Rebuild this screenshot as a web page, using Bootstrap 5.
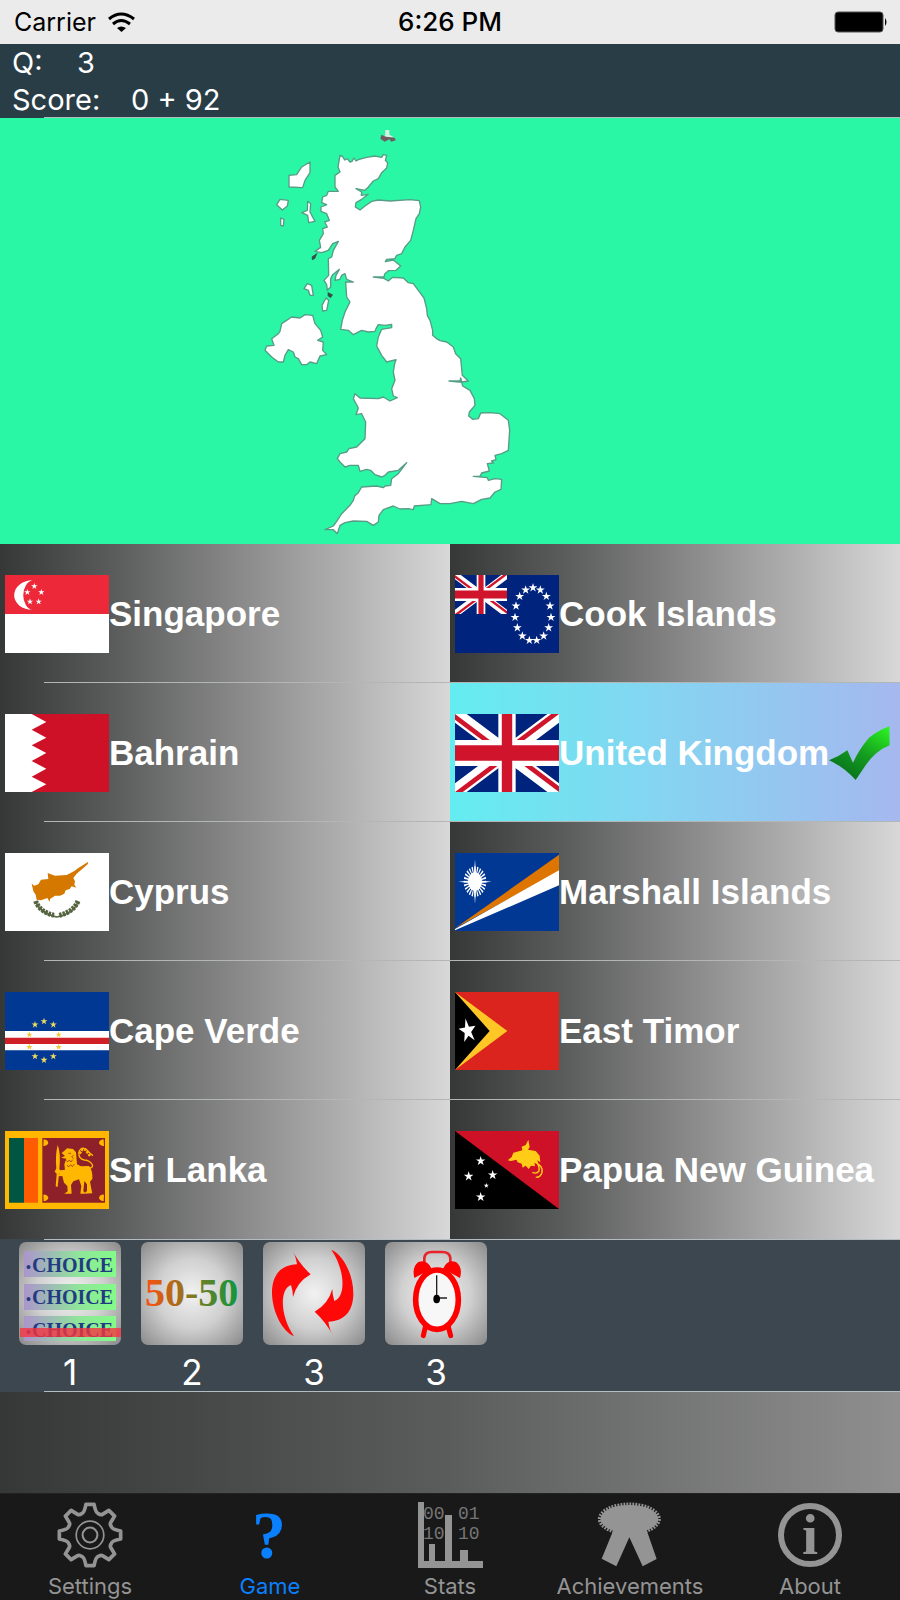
<!DOCTYPE html>
<html lang="en">
<head>
<meta charset="utf-8">
<meta name="viewport" content="width=device-width, initial-scale=1">
<title>Country Quiz</title>
<link href="https://cdn.jsdelivr.net/npm/bootstrap@5.3.0/dist/css/bootstrap.min.css" rel="stylesheet">
<style>
  body { font-family: Inter, Roboto, sans-serif; background: #191919; }
  .statusbar { background: #ebebeb; color: #000; height: 44px; font-size: 25px; line-height: 46px; }
  .carrier { padding-left: 14px; }
  .clock { font-weight: 500; font-size: 26px; }
  .scorebar { background: #293d47; color: #fff; font-size: 29px; line-height: 37px; }
  .score-row { height: 37px; padding-left: 12px; }
  .score-row + .score-row { height: 36px; }
  .label-q { width: 65px; }
  .label-score { width: 119px; }
  .inset-line { height: 1px; margin-left: 44px; background: #b4bcc0; }
  .map-panel { background: #29f7a5; }
  .map-panel svg { display: block; width: 100%; height: 426px; }
  .answer {
    height: 139px; padding: 0 0 0 5px; border: 0; text-align: left; color: #fff;
    font: bold 35px/40px "Liberation Sans", Arial, sans-serif; white-space: nowrap;
    background: linear-gradient(90deg, #353837 0%, #5a5c5b 25%, #848484 50%, #adadad 75%, #d8d8d8 100%);
  }
  .answer.correct { background: linear-gradient(90deg, #63edf0 0%, #84d5f1 45%, #a5b8ef 100%); }
  .answer-line { height: 1px; background: #b3b6b6; margin-top: -1px; position: relative; }
  .left-line { margin-left: 44px; }
  .flag { width: 104px; height: 78px; flex: none; }
  .powers-wrap { background: #3d474f; }
  .powers { padding: 2px 19px 0; gap: 20px; height: 151px; }
  .power { background: none; border: 0; padding: 0; width: 102px; color: #fff; font-size: 35px; line-height: 54px; }
  .power svg { display: block; width: 102px; height: 103px; }
  .power-base { fill: url(#silver); }
  .ad-space { height: 101px; background: linear-gradient(90deg, #353837 0%, #5b5d5c 50%, #8f8f8f 100%); }
  .tabs { background: #191919; border-top: 1px solid #222; height: 106px; padding-top: 8px; }
  .tab-item { color: #949494; font-size: 22px; line-height: 36px; text-decoration: none; text-align: center; }
  .tab-item svg { display: block; margin: 0 auto; width: 66px; height: 66px; overflow: visible; }
  .tab-item.current { color: #0a80ff; }
  .serif-mark { font-family: "Liberation Serif", serif; font-weight: bold; }
  .mono-mark { font-family: "Liberation Mono", monospace; }
</style>
</head>
<body>

<svg width="0" height="0" class="position-absolute" aria-hidden="true">
  <defs>
    <radialGradient id="silver" cx=".5" cy=".5" r=".68">
      <stop offset="0" stop-color="#f2f2f2"/><stop offset=".5" stop-color="#d0d0d0"/><stop offset="1" stop-color="#8e8e8e"/>
    </radialGradient>
    <linearGradient id="choice"><stop offset="0" stop-color="#ab95cc"/><stop offset=".6" stop-color="#8fe69a"/><stop offset="1" stop-color="#84fa88"/></linearGradient>
    <linearGradient id="fifty"><stop offset="0" stop-color="#ff5010"/><stop offset=".5" stop-color="#847820"/><stop offset="1" stop-color="#0c983e"/></linearGradient>
    <linearGradient id="tick" x1=".2" y1="1" x2=".9" y2="0"><stop offset="0" stop-color="#066c1c"/><stop offset=".5" stop-color="#149c20"/><stop offset="1" stop-color="#2cf020"/></linearGradient>
    <polygon id="star" points="0,-1 .225,-.309 .951,-.309 .363,.118 .588,.809 0,.382 -.588,.809 -.363,.118 -.951,-.309 -.225,-.309"/>
    <clipPath id="saltire"><path d="M30 15h30v15zv15h-30zh-30v-15zv-15h30z"/></clipPath>
    <symbol id="union" viewBox="0 0 60 30" preserveAspectRatio="none">
      <path fill="#00247d" d="M0 0h60v30H0z"/>
      <path d="M0 0 60 30M60 0 0 30" stroke="#fff" stroke-width="6"/>
      <path d="M0 0 60 30M60 0 0 30" stroke="#cf142b" stroke-width="4" clip-path="url(#saltire)"/>
      <path d="M30 0v30M0 15h60" stroke="#fff" stroke-width="10"/>
      <path d="M30 0v30M0 15h60" stroke="#cf142b" stroke-width="6"/>
    </symbol>
  </defs>
</svg>

<div class="statusbar d-flex align-items-center position-relative">
  <span class="carrier">Carrier</span>
  <svg class="ms-2 me-auto" width="34" height="22" viewBox="0 0 34 22" aria-hidden="true">
    <g fill="none" stroke="#000" stroke-width="3"><path d="M5 8q12-10 25 0"/><path d="M9 13q8-7 17 0"/></g>
    <path d="M13 17q4-3 9 0l-4.500 4z"/>
  </svg>
  <span class="clock position-absolute start-50 translate-middle-x">6:26 PM</span>
  <svg width="66" height="22" viewBox="0 0 66 22" role="img" aria-label="Battery full">
    <rect x="1" y="1" width="48" height="20" rx="3" stroke="#555"/><path d="M51 7q3 4 0 8z"/>
  </svg>
</div>

<header class="scorebar">
  <div class="score-row d-flex"><span class="label-q">Q:</span><span>3</span></div>
  <div class="score-row d-flex"><span class="label-score">Score:</span><span>0 + 92</span></div>
  <div class="inset-line"></div>
</header>

<main>
  <div class="map-panel">
    <svg viewBox="-750 8 2700 1278" preserveAspectRatio="xMinYMid meet" role="img" aria-label="Country outline">
      <g fill="#fff" stroke="#579c86" stroke-width="4" stroke-linejoin="round">
        <path d="M270 120 278 124 284 134 292 130 300 140 306 138 312 128 318 137 325 133 350 126 375 122 395 126 400 118 410 120 406 135 413 142 410 158 395 172 385 190 370 197 355 215 345 225 318 220 335 230 334 240 355 237 335 252 318 262 316 275 330 284 345 272 365 258 385 254 420 257 480 253 508 256 512 275 508 295 498 310 490 345 482 375 465 395 455 415 440 420 435 430 410 432 406 439 430 434 452 452 438 465 415 466 404 476 402 485 370 485 402 489 415 497 428 486 460 488 475 502 490 505 505 525 522 548 530 580 532 600 540 615 548 645 548 660 560 670 570 676 590 680 610 695 617 715 632 730 637 780 655 797 635 800 632 788 630 797 597 797 635 801 638 812 660 825 673 850 675 870 658 890 656 902 668 912 685 910 692 893 720 892 750 895 775 915 779 945 775 1005 755 1015 735 1020 738 1033 725 1037 730 1043 712 1045 718 1067 695 1073 690 1083 670 1083 712 1087 715 1095 735 1090 755 1092 753 1122 735 1130 720 1148 695 1152 670 1165 635 1158 600 1165 570 1165 545 1150 543 1168 493 1172 490 1183 475 1180 450 1181 430 1172 400 1183 387 1200 385 1220 370 1230 350 1218 310 1217 285 1222 270 1230 262 1255 250 1243 225 1243 250 1232 262 1215 275 1195 300 1170 310 1155 314 1142 325 1132 335 1115 380 1112 400 1117 405 1112 422 1110 425 1090 445 1075 470 1042 445 1065 415 1070 405 1080 395 1085 375 1078 362 1065 350 1062 330 1068 325 1050 300 1050 285 1055 270 1040 262 1030 270 1015 290 1010 297 1000 320 995 345 970 347 920 335 895 318 898 325 878 310 850 315 835 330 848 385 850 400 845 420 857 442 847 430 842 425 820 435 795 430 770 434 745 438 733 410 740 395 720 380 692 385 665 395 642 425 637 425 627 405 630 385 628 378 640 375 648 355 650 335 645 310 658 295 645 272 642 277 615 285 590 300 560 290 545 287 500 310 500 290 492 285 475 275 480 270 492 255 495 258 480 268 462 248 478 242 490 242 515 232 525 230 508 222 495 236 480 235 430 245 425 250 405 265 378 248 385 235 405 215 412 195 408 212 396 208 375 220 355 218 340 232 335 224 320 238 315 230 295 213 288 213 275 230 268 215 262 218 245 230 240 235 228 265 228 255 215 255 180 270 170 264 155Z"/>
        <path d="M90 648 95 625 125 605 150 608 165 598 188 600 195 625 212 645 218 665 203 675 220 680 218 705 230 718 210 722 200 745 180 740 170 748 155 748 145 730 135 725 130 710 115 703 105 720 100 740 85 740 65 725 45 705 50 692 72 690 65 670 85 655Z"/>
        <path d="M180 140 180 172 165 195 158 217 117 215 117 180 140 178 155 155ZM80 268 90 252 115 255 112 272 97 284ZM173 258 182 265 180 290 195 318 176 322 173 300 155 292 172 285ZM92 308 102 312 100 332 92 330ZM162 520 172 505 185 510 190 540 180 540 175 525ZM228 548 236 555 230 585 218 587 216 570Z"/>
      </g>
      <path d="M400 68 406 58V44H418V58L432 66Z" fill="#dcefe6"/>
      <path d="M394 58 408 64 434 67 437 75 424 79 418 72 404 79 391 70Z" fill="#705c60"/>
      <path d="M185 424 203 412 195 430 186 435ZM233 530 249 538 242 548 233 542Z" fill="#354e48"/>
    </svg>
  </div>

  <div class="row g-0">
    <div class="col-6 d-flex flex-column">
      <button type="button" class="answer d-flex align-items-center w-100">
        <svg class="flag" viewBox="0 0 312 234" aria-hidden="true"><path fill="#fff" d="M0 0h312v234H0z"/><path fill="#ed2939" d="M0 0h312v117H0z"/>
          <g fill="#fff"><path d="M82 16A54 44 0 0 0 82 105A32 45 0 0 1 82 16"/>
          <use href="#star" transform="translate(88 34) scale(10)"/><use href="#star" transform="translate(67 52) scale(10)"/><use href="#star" transform="translate(109 52) scale(10)"/><use href="#star" transform="translate(75 80) scale(10)"/><use href="#star" transform="translate(101 80) scale(10)"/></g></svg>
        <span>Singapore</span>
      </button>
      <div class="answer-line left-line"></div>
      <button type="button" class="answer d-flex align-items-center w-100">
        <svg class="flag" viewBox="0 0 312 234" aria-hidden="true"><path fill="#ce1126" d="M0 0h312v234H0z"/><path fill="#fff" d="M0 0H80L124 24 80 47 124 71 80 94 124 117 80 141 124 164 80 188 124 211 80 234H0z"/></svg>
        <span>Bahrain</span>
      </button>
      <div class="answer-line left-line"></div>
      <button type="button" class="answer d-flex align-items-center w-100">
        <svg class="flag" viewBox="0 0 312 234" aria-hidden="true"><path fill="#fff" d="M0 0h312v234H0z"/>
          <path fill="#d57800" d="M80 92 88 98 100 94 108 80 130 78 128 60 150 68 185 66 208 54 220 45 250 26 248 34 215 62 205 75 210 85 208 95 214 104 200 100 194 108 182 112 178 122 165 128 150 128 135 138 134 147 127 135 108 142 95 140 92 125 85 115Z"/>
          <g fill="none" stroke="#56633f"><path stroke-width="5" d="M92 146Q105 180 155 192Q207 180 219 146"/><path stroke-width="15" stroke-dasharray="8 3" d="M92 144Q103 176 147 187M219 144Q207 176 163 187"/></g></svg>
        <span>Cyprus</span>
      </button>
      <div class="answer-line left-line"></div>
      <button type="button" class="answer d-flex align-items-center w-100">
        <svg class="flag" viewBox="0 0 312 234" aria-hidden="true"><path fill="#003893" d="M0 0h312v234H0z"/><path fill="#fff" d="M0 117h312v58H0z"/><path fill="#cf2027" d="M0 137h312v19H0z"/>
          <g fill="#f2dc5c"><use href="#star" transform="translate(117 88) scale(11)"/><use href="#star" transform="translate(90 98) scale(11)"/><use href="#star" transform="translate(145 98) scale(11)"/><use href="#star" transform="translate(90 193) scale(11)"/><use href="#star" transform="translate(145 193) scale(11)"/><use href="#star" transform="translate(117 204) scale(11)"/></g>
          <g fill="#f4c63c"><use href="#star" transform="translate(73 128) scale(10)"/><use href="#star" transform="translate(161 128) scale(10)"/><use href="#star" transform="translate(73 165) scale(10)"/><use href="#star" transform="translate(161 165) scale(10)"/></g></svg>
        <span>Cape Verde</span>
      </button>
      <div class="answer-line left-line"></div>
      <button type="button" class="answer d-flex align-items-center w-100">
        <svg class="flag" viewBox="0 0 312 234" aria-hidden="true"><path fill="#ffb700" d="M0 0h312v234H0z"/><path fill="#005641" d="M12 21h45v194H12z"/><path fill="#ff5b00" d="M57 21h42v194H57z"/><path fill="#8d2029" d="M112 21h188v194H112z"/>
          <path fill="#ffb700" d="M116 25q14 2 14 12-4 10-15 8zM296 25q-14 2-14 12 4 10 15 8zM116 211q14-2 14-12-4-10-15-8zM296 211q-14-2-14-12 4-10 15-8z"/>
          <path fill="#ffb700" d="M158 42Q168 65 163 115L170 120 162 128 158 168 152 166 155 128 149 122 154 112Q150 75 158 42ZM170 66 180 58 186 52 204 54 213 64 216 100 228 106 252 105Q264 118 262 144L255 152 260 178 262 187 237 188 246 180 246 160 238 150 235 180 242 188 226 188 229 165 222 145 205 151 198 162 200 188 178 188 188 181 187 165 177 155 172 135 160 136 168 118 180 116 178 100 184 83 168 80 180 75Z"/>
          <path fill="none" stroke="#ffb700" stroke-width="4" d="M252 112C276 108 255 88 238 87C214 82 218 48 238 52C247 53 249 64 264 74"/>
          <path fill="none" stroke="#ffb700" stroke-width="8" stroke-dasharray="7 3" d="M224 68Q235 43 248 65L255 75"/>
          <path fill="none" stroke="#8d2029" stroke-width="2" d="M184 88l4 5 5-6 5 6 5-7M186 102l5 6 6-7 5 6 6-8M190 67h8M206 72l-6 6 6 5"/></svg>
        <span>Sri Lanka</span>
      </button>
    </div>

    <div class="col-6 d-flex flex-column">
      <button type="button" class="answer d-flex align-items-center w-100">
        <svg class="flag" viewBox="0 0 312 234" aria-hidden="true"><path fill="#00247d" d="M0 0h312v234H0z"/><use href="#union" width="156" height="117"/>
          <g fill="#fff">
            <use href="#star" transform="translate(234 38) scale(14)"/><use href="#star" transform="translate(256 45) scale(14)"/><use href="#star" transform="translate(212 45) scale(14)"/><use href="#star" transform="translate(274 64) scale(14)"/><use href="#star" transform="translate(194 64) scale(14)"/><use href="#star" transform="translate(285 93) scale(14)"/><use href="#star" transform="translate(183 93) scale(14)"/><use href="#star" transform="translate(288 127) scale(14)"/><use href="#star" transform="translate(180 127) scale(14)"/><use href="#star" transform="translate(281 158) scale(14)"/><use href="#star" transform="translate(187 158) scale(14)"/><use href="#star" transform="translate(266 183) scale(14)"/><use href="#star" transform="translate(202 183) scale(14)"/><use href="#star" transform="translate(245 196) scale(14)"/><use href="#star" transform="translate(223 196) scale(14)"/></g></svg>
        <span>Cook Islands</span>
      </button>
      <div class="answer-line"></div>
      <button type="button" class="answer correct d-flex align-items-center w-100">
        <svg class="flag" viewBox="0 0 312 234" aria-hidden="true"><use href="#union" width="312" height="234"/></svg>
        <span>United Kingdom</span>
        <svg width="61" height="54" viewBox="0 0 183 162" role="img" aria-label="Correct"><path fill="url(#tick)" d="M0 103 28 90 55 73 72 110Q90 70 120 35Q145 15 181 1L182 58Q140 75 112 115L80 162Q45 123 0 103Z"/></svg>
      </button>
      <div class="answer-line"></div>
      <button type="button" class="answer d-flex align-items-center w-100">
        <svg class="flag" viewBox="0 0 312 234" aria-hidden="true"><path fill="#003893" d="M0 0h312v234H0z"/><path fill="#dd7500" d="M0 226 312 5v50z"/><path fill="#fff" d="M0 228 312 52v45L0 232z"/>
          <g transform="translate(60 86) scale(1 1.330)" fill="#fff"><circle r="21"/><circle r="26" fill="none" stroke="#fff" stroke-width="16" pathLength="48" stroke-dasharray="1 1" stroke-dashoffset=".5"/><path d="M0-50 5 0 0 50-5 0zM-50 0 0-4 50 0 0 4z"/></g></svg>
        <span>Marshall Islands</span>
      </button>
      <div class="answer-line"></div>
      <button type="button" class="answer d-flex align-items-center w-100">
        <svg class="flag" viewBox="0 0 312 234" aria-hidden="true"><path fill="#dc241f" d="M0 0h312v234H0z"/><path fill="#ffc726" d="m0 0 157 117L0 234z"/><path d="m0 0 104 117L0 234z"/><use href="#star" fill="#fff" transform="translate(38 117) rotate(-10) scale(27 38)"/></svg>
        <span>East Timor</span>
      </button>
      <div class="answer-line"></div>
      <button type="button" class="answer d-flex align-items-center w-100">
        <svg class="flag" viewBox="0 0 312 234" aria-hidden="true"><path fill="#ce1126" d="M0 0h312v234H0z"/><path d="m0 0 312 234H0z"/>
          <g fill="#fff"><use href="#star" transform="translate(77 90) scale(15)"/><use href="#star" transform="translate(41 136) scale(15)"/><use href="#star" transform="translate(113 132) scale(15)"/><use href="#star" transform="translate(77 198) scale(15)"/><use href="#star" transform="translate(94 164) scale(8)"/></g>
          <path fill="#ffcc17" d="M158 88 170 78 175 65 194 60 202 58 200 47 212 42 220 26 224 48 219 56 242 60 254 74 256 94 247 88 250 99 238 94 240 106 228 104 221 114 212 104 203 110 200 98 188 94 184 86 168 90Z"/>
          <path fill="none" stroke="#ffcc17" stroke-width="4" d="M236 92Q268 105 260 128Q252 142 242 138M240 88Q255 105 252 120Q245 130 232 124"/></svg>
        <span>Papua New Guinea</span>
      </button>
    </div>
  </div>

  <div class="powers-wrap">
    <div class="inset-line"></div>
    <div class="powers d-flex">
      <button type="button" class="power" aria-label="Remove one choice, 1 left">
        <svg viewBox="0 0 102 103" aria-hidden="true"><rect class="power-base" width="102" height="103" rx="7"/>
          <path fill="url(#choice)" d="M5 9h92v26H5zM5 42h92v26H5zM5 74h92v25H5z"/>
          <g class="serif-mark" font-size="20" fill="#223a82"><text x="7" y="30" font-size="14">•</text><text x="13" y="30">CHOICE</text><text x="7" y="62" font-size="14">•</text><text x="13" y="62">CHOICE</text><text x="7" y="95" font-size="14">•</text><text x="13" y="95">CHOICE</text></g>
          <path fill="#f53440" fill-opacity=".8" d="M1 86h101v9H1z"/></svg>1
      </button>
      <button type="button" class="power" aria-label="Fifty fifty, 2 left">
        <svg viewBox="0 0 102 103" aria-hidden="true"><rect class="power-base" width="102" height="103" rx="7"/><text class="serif-mark" x="4" y="64" font-size="40" fill="url(#fifty)">50-50</text></svg>2
      </button>
      <button type="button" class="power" aria-label="Swap question, 3 left">
        <svg viewBox="0 0 306 309" aria-hidden="true"><rect class="power-base" width="306" height="309" rx="21"/>
          <g fill="#ff0808"><path id="swoosh" d="M93 283C60 270 25 210 27 145C30 100 50 70 102 67Q98 40 86 22Q108 65 143 97Q102 120 90 165Q90 148 84 129C50 140 50 220 93 283Z"/><use href="#swoosh" transform="rotate(180 149 153)"/></g></svg>3
      </button>
      <button type="button" class="power" aria-label="Extra time, 3 left">
        <svg viewBox="0 0 306 309" aria-hidden="true"><rect class="power-base" width="306" height="309" rx="21"/>
          <path fill="none" stroke="#e8242a" stroke-width="8" d="M118 65V48Q120 30 140 30H172Q194 30 196 48V65"/>
          <path d="M121 255 115 281M190 255 197 281" stroke="#f00" stroke-width="15" stroke-linecap="round"/>
          <path fill="#f00" d="M88 108Q80 75 100 60Q126 50 140 80ZM225 108Q234 75 213 60Q187 50 174 80Z"/>
          <ellipse cx="156" cy="173" rx="64" ry="89" fill="#f7f7f7" stroke="#f00" stroke-width="17"/>
          <path d="M155 100V170M155 168H186" stroke="#222" stroke-width="4"/><ellipse cx="155" cy="171" rx="10" ry="13"/></svg>3
      </button>
    </div>
  </div>
  <div class="powers-wrap"><div class="inset-line"></div></div>
  <div class="ad-space"></div>
</main>

<nav class="tabs" aria-label="Main">
  <div class="row g-0">
    <a href="#" class="col tab-item"><svg viewBox="-98 -98 196 196" fill="none" stroke="currentColor" aria-hidden="true"><path stroke-width="11" stroke-linejoin="round" d="M-12-91H12Q17-66 24-64Q32-58 38-62L56-73 73-56 62-38Q58-32 64-24Q66-17 91-12V12Q66 17 64 24Q58 32 62 38L73 56 56 73 38 62Q32 58 24 64Q17 66 12 91H-12Q-17 66-24 64Q-32 58-38 62L-56 73-73 56-62 38Q-58 32-64 24Q-66 17-91 12V-12Q-66-17-64-24Q-58-32-62-38L-73-56-56-73-38-62Q-32-58-24-64Q-17-66-12-91Z"/><circle r="41" stroke-width="5"/><circle r="22" stroke-width="6"/></svg>Settings</a>
    <a href="#" class="col tab-item current" aria-current="page"><svg viewBox="0 0 66 66" aria-hidden="true"><text class="serif-mark" x="32" y="56" font-size="68" text-anchor="middle" fill="currentColor">?</text></svg>Game</a>
    <a href="#" class="col tab-item"><svg viewBox="0 0 66 66" fill="currentColor" aria-hidden="true"><path d="M1 0h6v59h5V42h6v17h10V13h7v46h8V48h8v11h15v7H1z"/><g class="mono-mark" font-size="18" opacity=".75"><text x="6" y="17">00</text><text x="41" y="17">01</text><text x="6" y="37">10</text><text x="41" y="37">10</text></g></svg>Stats</a>
    <a href="#" class="col tab-item"><svg viewBox="-2 -3 198 198" fill="currentColor" aria-hidden="true"><ellipse cx="95" cy="48" rx="87" ry="42"/><ellipse cx="95" cy="48" rx="89" ry="44" fill="none" stroke="currentColor" stroke-width="11" pathLength="120" stroke-dasharray="1.500 1"/><path d="M47 82 12 167 56 190 95 103 135 190 177 168 147 82Z"/></svg>Achievements</a>
    <a href="#" class="col tab-item"><svg viewBox="0 0 66 66" fill="currentColor" aria-hidden="true"><circle cx="33" cy="33" r="29" fill="none" stroke="currentColor" stroke-width="6"/><text class="serif-mark" x="33" y="52" font-size="58" text-anchor="middle">i</text></svg>About</a>
  </div>
</nav>

<script src="https://cdn.jsdelivr.net/npm/bootstrap@5.3.0/dist/js/bootstrap.bundle.min.js"></script>
</body>
</html>
